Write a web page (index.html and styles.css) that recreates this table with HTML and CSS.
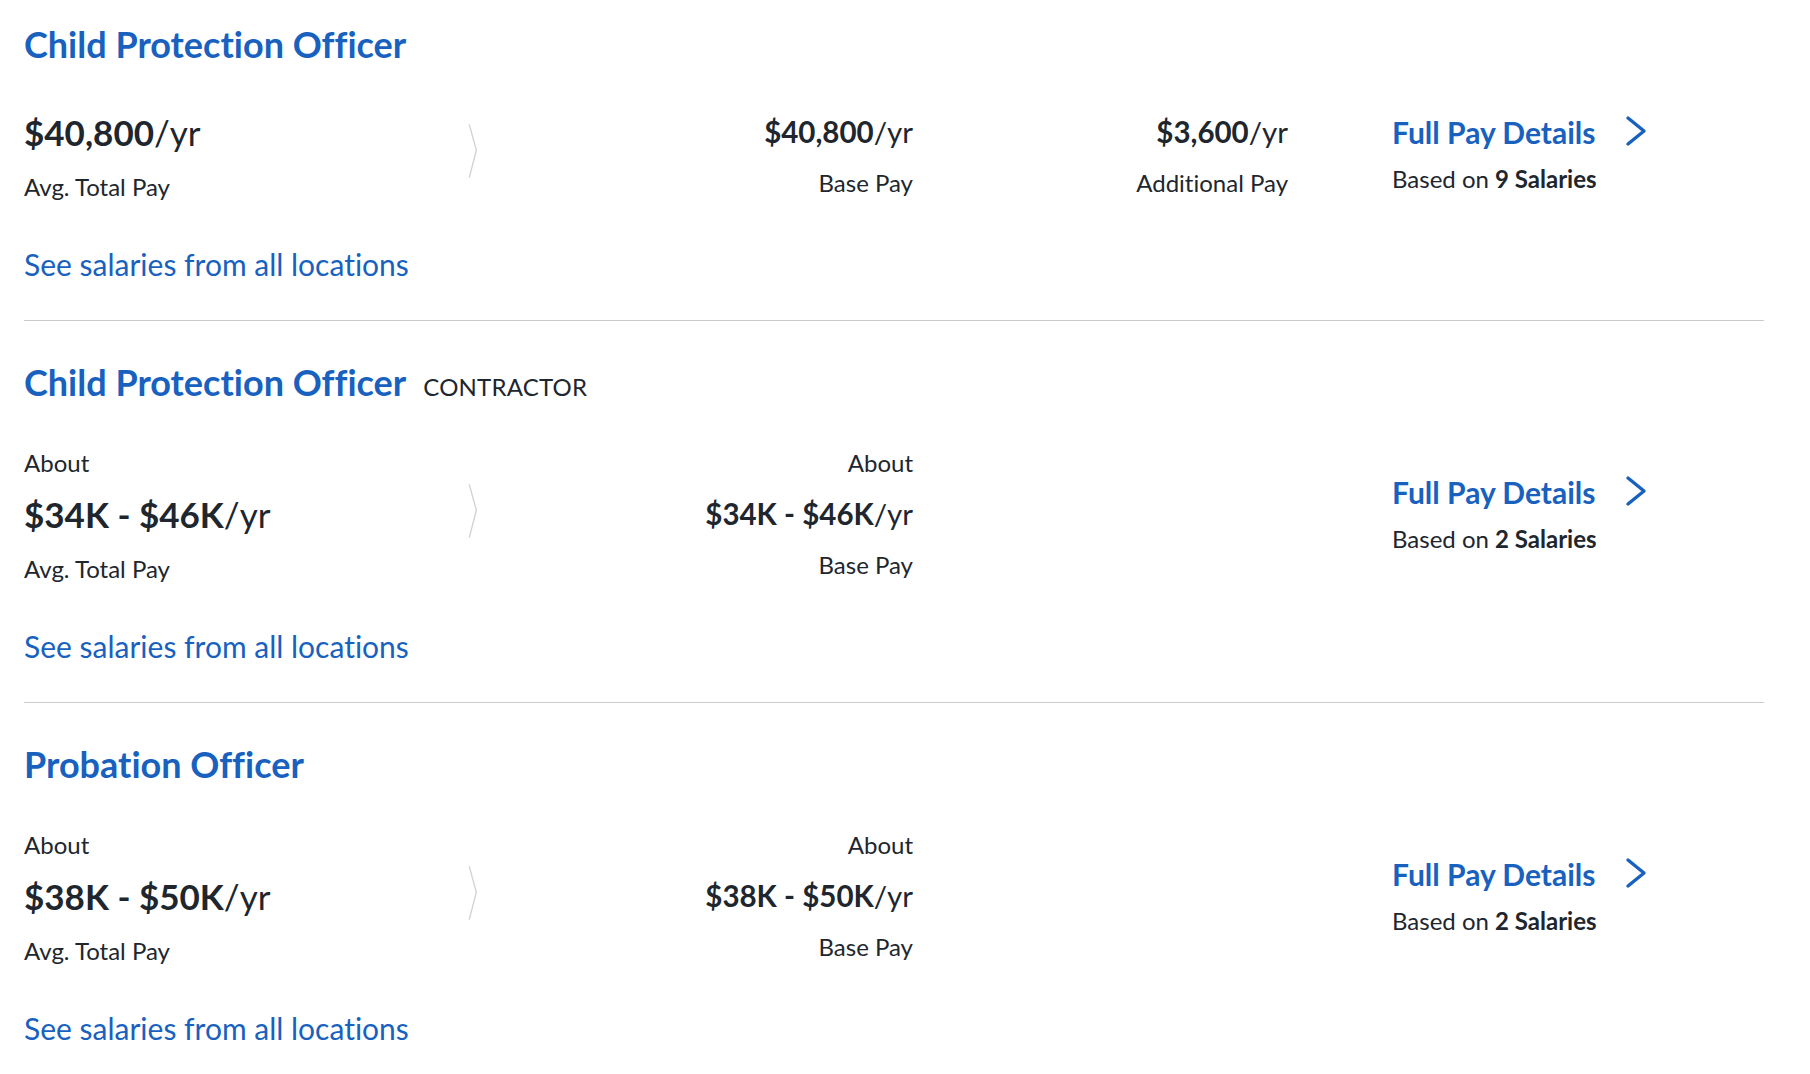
FILE: index.html
```html
<!DOCTYPE html>
<html lang="en">
<head>
<meta charset="utf-8">
<title>Salaries</title>
<link rel="stylesheet" href="styles.css">
</head>
<body>
<main class="list">
  <section class="job">
    <h2 class="job-title"><a href="#">Child Protection Officer</a></h2>
    <div class="pay-row">
      <div class="col total">
        <div class="amount-lg"><b>$40,800</b>/yr</div>
        <div class="label">Avg. Total Pay</div>
      </div>
      <div class="divider-chev"><svg width="12" height="66" viewBox="0 0 12 66"><path d="M1.5 1 L10 32 L1.5 65" fill="none" stroke="#cfd1d4" stroke-width="1.6"/></svg></div>
      <div class="col base">
        <div class="amount-md"><b>$40,800</b>/yr</div>
        <div class="label label-sm">Base Pay</div>
      </div>
      <div class="col add">
        <div class="amount-md"><b>$3,600</b>/yr</div>
        <div class="label label-sm">Additional Pay</div>
      </div>
      <div class="details">
        <a class="details-link" href="#">Full Pay Details <svg class="chev" width="22" height="32" viewBox="0 0 22 32"><path d="M3 3 L19 16 L3 29" fill="none" stroke="#1861bf" stroke-width="3.4" stroke-linecap="round" stroke-linejoin="round"/></svg></a>
        <div class="based">Based on <b>9 Salaries</b></div>
      </div>
    </div>
    <a class="see-all" href="#">See salaries from all locations</a>
  </section>

  <section class="job">
    <h2 class="job-title"><a href="#">Child Protection Officer</a><span class="tag">CONTRACTOR</span></h2>
    <div class="pay-row">
      <div class="col total">
        <div class="about">About</div>
        <div class="amount-lg"><b>$34K - $46K</b>/yr</div>
        <div class="label">Avg. Total Pay</div>
      </div>
      <div class="divider-chev"><svg width="12" height="66" viewBox="0 0 12 66"><path d="M1.5 1 L10 32 L1.5 65" fill="none" stroke="#cfd1d4" stroke-width="1.6"/></svg></div>
      <div class="col base">
        <div class="about">About</div>
        <div class="amount-md"><b>$34K - $46K</b>/yr</div>
        <div class="label label-sm">Base Pay</div>
      </div>
      <div class="col add"></div>
      <div class="details">
        <a class="details-link" href="#">Full Pay Details <svg class="chev" width="22" height="32" viewBox="0 0 22 32"><path d="M3 3 L19 16 L3 29" fill="none" stroke="#1861bf" stroke-width="3.4" stroke-linecap="round" stroke-linejoin="round"/></svg></a>
        <div class="based">Based on <b>2 Salaries</b></div>
      </div>
    </div>
    <a class="see-all" href="#">See salaries from all locations</a>
  </section>

  <section class="job">
    <h2 class="job-title"><a href="#">Probation Officer</a></h2>
    <div class="pay-row">
      <div class="col total">
        <div class="about">About</div>
        <div class="amount-lg"><b>$38K - $50K</b>/yr</div>
        <div class="label">Avg. Total Pay</div>
      </div>
      <div class="divider-chev"><svg width="12" height="66" viewBox="0 0 12 66"><path d="M1.5 1 L10 32 L1.5 65" fill="none" stroke="#cfd1d4" stroke-width="1.6"/></svg></div>
      <div class="col base">
        <div class="about">About</div>
        <div class="amount-md"><b>$38K - $50K</b>/yr</div>
        <div class="label label-sm">Base Pay</div>
      </div>
      <div class="col add"></div>
      <div class="details">
        <a class="details-link" href="#">Full Pay Details <svg class="chev" width="22" height="32" viewBox="0 0 22 32"><path d="M3 3 L19 16 L3 29" fill="none" stroke="#1861bf" stroke-width="3.4" stroke-linecap="round" stroke-linejoin="round"/></svg></a>
        <div class="based">Based on <b>2 Salaries</b></div>
      </div>
    </div>
    <a class="see-all" href="#">See salaries from all locations</a>
  </section>
</main>
</body>
</html>
```

FILE: styles.css
```css
html, body {
  margin: 0;
  padding: 0;
  background: #ffffff;
}
body {
  font-family: Lato, "Open Sans", Arial, sans-serif;
  color: #20262e;
  overflow: hidden;
  font-feature-settings: "liga" 0;
}
a { text-decoration: none; }

.list {
  padding: 24px 46px 0 24px;
}
.job {
  border-bottom: 1px solid #c8cacd;
  padding-bottom: 38px;
  margin-bottom: 41px;
}
.job-title {
  margin: 0;
  font-size: 36px;
  line-height: 40px;
  font-weight: 700;
  display: flex;
  align-items: baseline;
}
.job-title a { color: #1861bf; }
.tag {
  font-size: 24px;
  line-height: 1;
  font-weight: 400;
  color: #20262e;
  margin-left: 17px;
  letter-spacing: 0.2px;
}

.pay-row {
  display: flex;
  align-items: flex-start;
  margin-top: 46px;
}
.col { display: flex; flex-direction: column; }
.total { width: 444px; }
.divider-chev {
  width: 10px;
  align-self: center;
  display: flex;
  margin-top: -10px;
}
.base { width: 435px; align-items: flex-end; }
.add { width: 375px; align-items: flex-end; }
.about {
  font-size: 24px;
  line-height: 30px;
  margin-bottom: 14px;
}
.amount-lg {
  font-size: 35px;
  line-height: 44px;
}
.amount-md {
  font-size: 29.5px;
  line-height: 44px;
}
.amount-lg b, .amount-md b { font-weight: 700; }
.label {
  font-size: 24px;
  line-height: 30px;
  margin-top: 18px;
}
.label-sm { margin-top: 14px; }

.details {
  margin-left: 104px;
  align-self: center;
  display: flex;
  flex-direction: column;
  margin-top: -4px;
}
.details-link {
  color: #1861bf;
  font-size: 30px;
  line-height: 36px;
  font-weight: 700;
  display: flex;
  align-items: center;
}
.chev { margin-left: 30px; margin-top: -3px; }
.based {
  font-size: 24px;
  line-height: 30px;
  margin-top: 14px;
}
.based b { font-weight: 700; }

.see-all {
  display: inline-block;
  color: #1861bf;
  font-size: 30px;
  line-height: 36px;
  margin-top: 44px;
}
```
